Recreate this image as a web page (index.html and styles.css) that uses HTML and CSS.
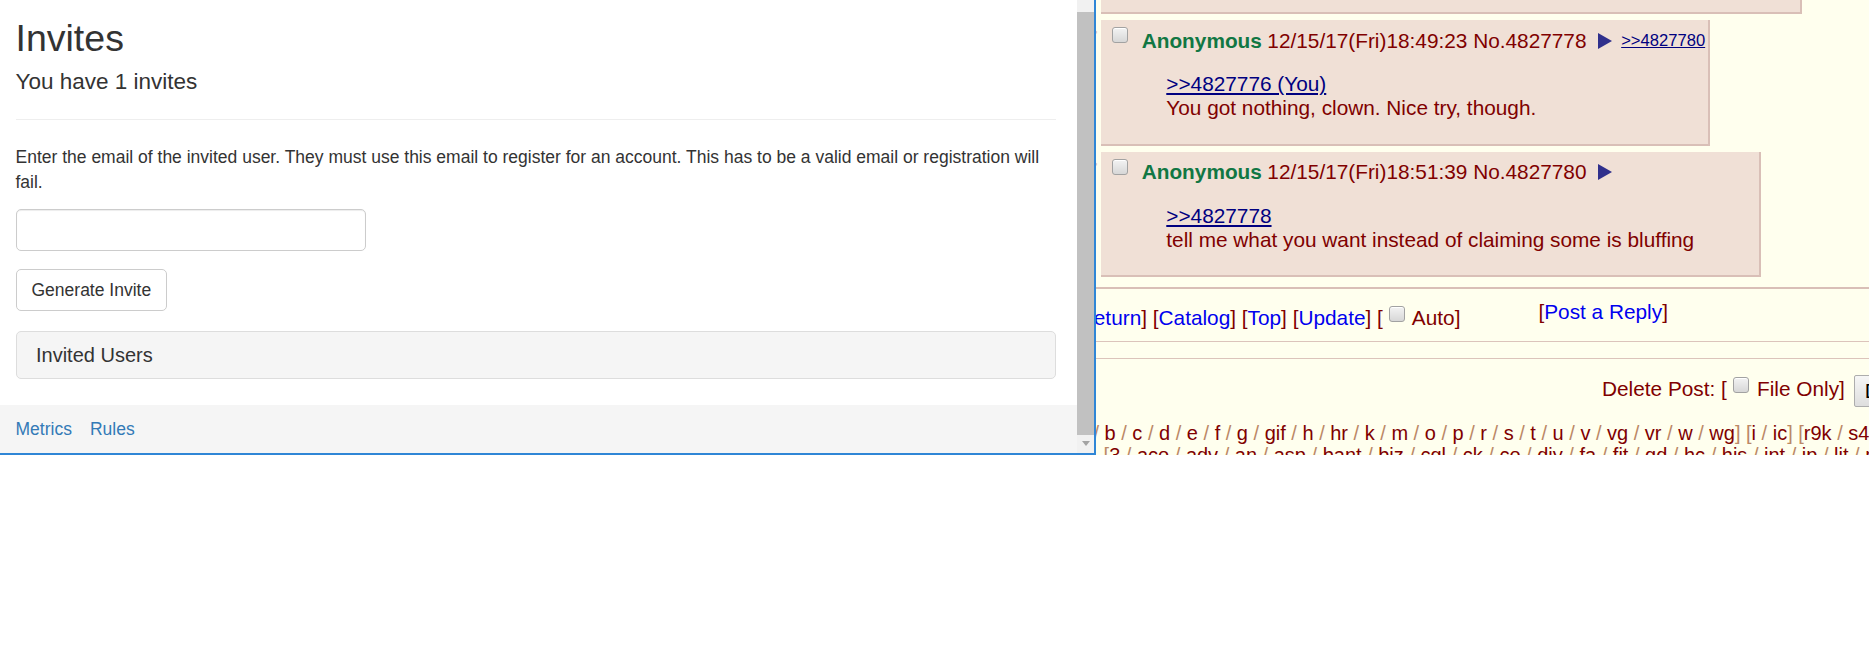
FILE: index.html
```html
<!DOCTYPE html>
<html lang="en">
<head>
    <meta charset="UTF-8">
    <meta name="viewport" content="width=device-width, initial-scale=1.0">
    <title>Invites</title>
    <link rel="stylesheet" href="styles.css">
</head>
<body>
    <div class="desktop">
        <div class="popup">
            <div class="page">
                <div class="content">
                    <h2 class="title">Invites</h2>
                    <h4 class="subtitle">You have 1 invites</h4>
                    <hr class="rule">
                    <p class="help">Enter the email of the invited user. They must use this email to register for an account. This has to be a valid email or registration will fail.</p>
                    <input class="email" type="text">
                    <button class="btn">Generate Invite</button>
                    <div class="panel">
                        <h3 class="panel-title">Invited Users</h3>
                    </div>
                </div>
                <div class="footer">
                    <a href="#">Metrics</a>
                    <a href="#">Rules</a>
                </div>
            </div>
            <div class="scrollbar">
                <div class="thumb"></div>
                <div class="arrow"></div>
            </div>
        </div>

        <div class="board">
            <div class="thread">
                <div class="replyrow">
                    <div class="reply stub"></div>
                </div>
                <div class="replyrow">
                    <span class="side">&gt;&gt;</span>
                    <div class="reply">
                        <div class="postinfo">
                            <input type="checkbox" class="cb">
                            <span class="name">Anonymous</span>
                            <span class="datetime">12/15/17(Fri)18:49:23 No.4827778</span>
                            <svg class="menu" width="14" height="16" viewBox="0 0 14 16"><polygon points="0,0 14,8 0,16"/></svg>
                            <a class="backlink" href="#">&gt;&gt;4827780</a>
                        </div>
                        <blockquote class="message"><a class="quotelink" href="#">&gt;&gt;4827776 (You)</a><br>You got nothing, clown. Nice try, though.</blockquote>
                    </div>
                </div>
                <div class="replyrow">
                    <span class="side">&gt;&gt;</span>
                    <div class="reply">
                        <div class="postinfo">
                            <input type="checkbox" class="cb">
                            <span class="name">Anonymous</span>
                            <span class="datetime">12/15/17(Fri)18:51:39 No.4827780</span>
                            <svg class="menu" width="14" height="16" viewBox="0 0 14 16"><polygon points="0,0 14,8 0,16"/></svg>
                        </div>
                        <blockquote class="message"><a class="quotelink" href="#">&gt;&gt;4827778</a><br>tell me what you want instead of claiming some is bluffing</blockquote>
                    </div>
                </div>
            </div>

            <hr class="sep first">
            <div class="navrow">
                <div class="navlinks">[<a href="#">Return</a>] [<a href="#">Catalog</a>] [<a href="#">Top</a>] [<a href="#">Update</a>] [ <input type="checkbox" class="cb"> Auto]</div>
                <div class="postreply">[<a href="#">Post a Reply</a>]</div>
            </div>
            <hr class="sep second">
            <hr class="sep third">

            <div class="deleterow">
                <span class="delete-label">Delete Post: [ <input type="checkbox" class="cb"> File Only]</span>
                <button class="delbtn">Delete</button>
            </div>

            <div class="boardline one">[<a href="#">a</a> / <a href="#">b</a> / <a href="#">c</a> / <a href="#">d</a> / <a href="#">e</a> / <a href="#">f</a> / <a href="#">g</a> / <a href="#">gif</a> / <a href="#">h</a> / <a href="#">hr</a> / <a href="#">k</a> / <a href="#">m</a> / <a href="#">o</a> / <a href="#">p</a> / <a href="#">r</a> / <a href="#">s</a> / <a href="#">t</a> / <a href="#">u</a> / <a href="#">v</a> / <a href="#">vg</a> / <a href="#">vr</a> / <a href="#">w</a> / <a href="#">wg</a>] [<a href="#">i</a> / <a href="#">ic</a>] [<a href="#">r9k</a> / <a href="#">s4s</a> / <a href="#">vip</a> / <a href="#">qa</a>] [<a href="#">cm</a> / <a href="#">hm</a> / <a href="#">lgbt</a> / <a href="#">y</a>]</div>
            <div class="boardline two">[<a href="#">3</a> / <a href="#">aco</a> / <a href="#">adv</a> / <a href="#">an</a> / <a href="#">asp</a> / <a href="#">bant</a> / <a href="#">biz</a> / <a href="#">cgl</a> / <a href="#">ck</a> / <a href="#">co</a> / <a href="#">diy</a> / <a href="#">fa</a> / <a href="#">fit</a> / <a href="#">gd</a> / <a href="#">hc</a> / <a href="#">his</a> / <a href="#">int</a> / <a href="#">jp</a> / <a href="#">lit</a> / <a href="#">mlp</a> / <a href="#">mu</a> / <a href="#">n</a>]</div>
        </div>
    </div>
</body>
</html>
```

FILE: styles.css
```css
* {
    box-sizing: border-box;
}

body {
    margin: 0;
    background: #fff;
    font-family: "Liberation Sans", Arial, sans-serif;
}

.desktop {
    display: flex;
    width: 1869px;
    height: 455px;
    overflow: hidden;
}

/* invite window */
.popup {
    flex: none;
    display: flex;
    width: 1096px;
    height: 455px;
    background: #fff;
    border-right: 2px solid #2f86d6;
    border-bottom: 2px solid #2f86d6;
}

.page {
    flex: 1;
    display: flex;
    flex-direction: column;
    overflow: hidden;
    color: #333;
    font-size: 17.5px;
    line-height: 25px;
}

.content {
    padding: 0 21px 0 15.5px;
}

.title {
    margin: 17.5px 0 0;
    font-size: 37.5px;
    line-height: 41px;
    font-weight: normal;
}

.subtitle {
    margin: 10.2px 0 0;
    font-size: 22.5px;
    line-height: 25px;
    font-weight: normal;
}

.rule {
    margin: 25.5px 0 0;
    border: 0;
    border-top: 1px solid #eee;
}

.help {
    margin: 25.3px 0 0;
}

.email {
    display: block;
    margin-top: 13.2px;
    width: 350px;
    height: 42px;
    border: 1px solid #ccc;
    border-radius: 5px;
    box-shadow: inset 0 1px 1px rgba(0, 0, 0, .075);
}

.btn {
    display: block;
    margin-top: 18.7px;
    padding: 7.5px 15px;
    font-family: inherit;
    font-size: 17.5px;
    line-height: 25px;
    color: #333;
    background: #fff;
    border: 1px solid #ccc;
    border-radius: 5px;
}

.panel {
    margin-top: 20px;
    padding: 11.5px 19.5px 12.5px;
    background: #f5f5f5;
    border: 1px solid #ddd;
    border-radius: 5px;
}

.panel-title {
    margin: 0;
    font-size: 20px;
    line-height: 22px;
    font-weight: normal;
}

.footer {
    flex: 1;
    display: flex;
    gap: 18px;
    margin-top: 25.7px;
    padding: 12.4px 15.5px;
    background: #f5f5f5;
}

.footer a {
    color: #337ab7;
    text-decoration: none;
}

.scrollbar {
    flex: none;
    width: 17px;
    padding-top: 12px;
    background: #f1f1f1;
}

.thumb {
    height: 423px;
    background: #c1c1c1;
}

.arrow {
    width: 0;
    margin: 6px auto 0;
    border-left: 4px solid transparent;
    border-right: 4px solid transparent;
    border-top: 5px solid #a3a3a3;
}

/* thread page behind */
.board {
    flex: 1;
    min-width: 0;
    overflow: hidden;
    background: #ffffee;
    color: #800000;
    font-size: 20.8px;
    line-height: 24px;
    white-space: nowrap;
}

.thread {
    display: flex;
    flex-direction: column;
    gap: 6px;
}

.replyrow {
    display: flex;
    align-items: flex-start;
    margin-left: -28px;
}

.side {
    flex: none;
    width: 30px;
    margin-right: 3px;
    text-align: right;
    color: #e0bfb7;
}

.reply {
    flex: none;
    padding: 8.6px 3.3px 0 10.7px;
    background: #f0e0d6;
    border-right: 2px solid #d9bfb7;
    border-bottom: 2px solid #d9bfb7;
}

.reply.stub {
    width: 701px;
    height: 14px;
    margin-left: 33px;
    padding: 0;
}

.postinfo {
    display: flex;
    align-items: flex-start;
}

.cb {
    -webkit-appearance: none;
    appearance: none;
    width: 16px;
    height: 16px;
    margin: 0;
    vertical-align: top;
    border: 1px solid #a2a2a2;
    border-radius: 3px;
    background: linear-gradient(#f3f3f3, #d7d7d7);
    box-shadow: inset 0 1px 0 #fff;
}

.postinfo .cb {
    margin: -1.3px 14px 0 0;
}

.name {
    margin-right: 5.5px;
    color: #117743;
    font-weight: bold;
}

.menu {
    margin: 4.1px 0 0 11.3px;
    fill: #30308c;
}

.backlink {
    margin-left: 9.4px;
    font-size: 16.6px;
    color: #000080;
}

.message {
    margin: 19.8px 62px 23.3px 54.6px;
}

.quotelink {
    color: #000080;
}

.sep {
    margin: 0;
    border: 0;
    border-top: 1px solid #dcc4bb;
}

.sep.first {
    margin-top: 9.8px;
    border-top: 2px solid #d9bfb7;
}

.sep.second {
    margin-top: 11.8px;
}

.sep.third {
    margin-top: 15.6px;
}

.navrow {
    display: flex;
    align-items: flex-start;
    margin-left: -23px;
    padding-top: 10.4px;
}

.navlinks {
    margin-top: 6px;
}

.navlinks a,
.postreply a {
    color: #0000ee;
    text-decoration: none;
}

.navlinks .cb,
.delete-label .cb {
    margin-right: 2.6px;
}

.postreply {
    margin-left: 78px;
}

.deleterow {
    display: flex;
    align-items: flex-start;
    margin-top: 15.7px;
    padding-left: 506px;
}

.delete-label {
    margin-top: 2.6px;
}

.delbtn {
    flex: none;
    height: 32px;
    margin-left: 9px;
    padding: 0 10px;
    font-family: inherit;
    font-size: 20.8px;
    color: #000;
    background: linear-gradient(#f6f6f6, #dedede);
    border: 1px solid #adadad;
    border-radius: 2px;
}

.boardline {
    font-size: 20px;
    line-height: 22px;
    color: #bb8866;
}

.boardline a {
    color: #800000;
    text-decoration: none;
}

.boardline.one {
    margin-top: 15px;
    margin-left: -24.8px;
}

.boardline.two {
    margin-left: 7.6px;
}
```
